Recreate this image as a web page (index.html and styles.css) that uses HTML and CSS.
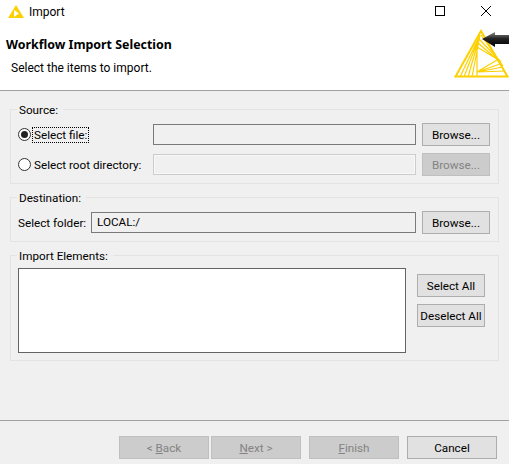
FILE: index.html
```html
<!DOCTYPE html>
<html lang="en">
<head>
  <meta charset="UTF-8">
  <meta name="viewport" content="width=device-width, initial-scale=1.0">
  <title>Import</title>
  <link rel="stylesheet" href="styles.css">
</head>
<body>
  <div class="titlebar">
    <svg class="app-icon" width="16" height="13" viewBox="0 0 16 13">
      <polygon points="8,0 16,13 0,13" fill="#fdd000"/>
      <polygon points="6,5 11,8.5 6,12" fill="#fff"/>
    </svg>
    <span class="title">Import</span>
    <svg class="win-btn max" width="10" height="10" viewBox="0 0 10 10">
      <rect x="0.5" y="0.5" width="9" height="9" fill="none" stroke="#000"/>
    </svg>
    <svg class="win-btn close" width="10" height="10" viewBox="0 0 10 10">
      <path d="M0 0L10 10M10 0L0 10" fill="none" stroke="#000"/>
    </svg>
  </div>

  <div class="banner">
    <div class="banner-text">
      <h1>Workflow Import Selection</h1>
      <p>Select the items to import.</p>
    </div>
    <svg class="logo" width="55" height="50" viewBox="0 0 55 50">
      <defs>
        <linearGradient id="arrowFill" x1="0" y1="0" x2="0" y2="1">
          <stop offset="0" stop-color="#888"/>
          <stop offset="0.45" stop-color="#222"/>
          <stop offset="1" stop-color="#000"/>
        </linearGradient>
      </defs>
      <g fill="none" stroke="#fdd000" stroke-width="1.2">
        <polygon points="27,2 53.5,47.5 1.5,47.5" stroke-width="2"/>
        <path d="M26 6L6 48M26 6L10 48M26 6L14 48M26 6L18 48M23 19L23 47"/>
        <path d="M27 6L49 37M25 10L47 33M24 14L45 32M23 18L43 30"/>
        <path d="M23 43L43 31M23 43L46 35M23 43L49 38M23 43L51 42"/>
      </g>
      <polygon points="28,10 41,3 41,6 55,6 55,15 41,15 41,18" fill="url(#arrowFill)"/>
    </svg>
  </div>

  <div class="content">
    <div class="group source">
      <span class="legend">Source:</span>
      <div class="row">
        <label class="radio checked"><span class="dot"></span><span class="focus">Select file:</span></label>
        <div class="field"></div>
        <button class="btn">Browse...</button>
      </div>
      <div class="row">
        <label class="radio"><span class="dot"></span><span class="radio-text">Select root directory:</span></label>
        <div class="field off"></div>
        <button class="btn off">Browse...</button>
      </div>
    </div>

    <div class="group dest">
      <span class="legend">Destination:</span>
      <div class="row">
        <label class="folder-label">Select folder:</label>
        <div class="field">LOCAL:/</div>
        <button class="btn">Browse...</button>
      </div>
    </div>

    <div class="group elements">
      <span class="legend">Import Elements:</span>
      <div class="list"></div>
      <div class="side">
        <button class="btn">Select All</button>
        <button class="btn">Deselect All</button>
      </div>
    </div>
  </div>

  <div class="footer">
    <button class="btn wide off">&lt; <u>B</u>ack</button>
    <button class="btn wide off"><u>N</u>ext &gt;</button>
    <button class="btn wide off gap"><u>F</u>inish</button>
    <button class="btn wide gap">Cancel</button>
  </div>
</body>
</html>
```

FILE: styles.css
```css
* {
  box-sizing: border-box;
}

body {
  font-family: 'Roboto', sans-serif;
  font-size: 11.7px;
  background-color: #f0f0f0;
  color: #000;
  margin: 0;
  width: 509px;
  height: 464px;
  overflow: hidden;
  display: flex;
  flex-direction: column;
}

.titlebar {
  height: 24px;
  background-color: #fff;
  display: flex;
  align-items: center;
  padding-left: 8px;
}

.app-icon {
  margin-right: 5px;
  margin-bottom: 1px;
}

.title {
  flex: 1;
  font-size: 12px;
}

.win-btn {
  margin-bottom: 2px;
}

.win-btn.max {
  margin-right: 36px;
}

.win-btn.close {
  margin-right: 18px;
}

.banner {
  height: 67px;
  background-color: #fff;
  border-bottom: 1px solid #a0a0a0;
  display: flex;
  justify-content: space-between;
}

h1 {
  font-family: 'Noto Sans', sans-serif;
  font-size: 12.4px;
  font-weight: bold;
  line-height: 16px;
  margin: 13px 0 0 6px;
}

.banner-text p {
  font-size: 12px;
  line-height: 16px;
  margin: 7px 0 0 11px;
}

.logo {
  margin-top: 5px;
}

.content {
  height: 329px;
  padding: 18px 10px 0;
}

.group {
  width: 489px;
  margin-bottom: 13px;
  padding: 13px 8px 7px 7px;
  border: 1px solid #e3e3e3;
  position: relative;
}

.legend {
  position: absolute;
  left: 6px;
  top: -8px;
  padding: 0 5px 0 2px;
  line-height: 16px;
  background-color: #f0f0f0;
}

.row {
  display: flex;
  align-items: center;
  height: 23px;
}

.row + .row {
  margin-top: 7px;
}

.radio {
  width: 135px;
  display: flex;
  align-items: center;
}

.dot {
  width: 13px;
  height: 13px;
  border: 1px solid #333;
  border-radius: 50%;
  background-color: #fff;
  margin-right: 2px;
  display: flex;
  align-items: center;
  justify-content: center;
}

.checked .dot::after {
  content: "";
  width: 7px;
  height: 7px;
  border-radius: 50%;
  background-color: #222;
}

.focus {
  outline: 1px dotted #000;
  padding: 0 1px;
}

.radio-text {
  padding-left: 1px;
}

.folder-label {
  width: 73px;
}

.field {
  flex: 1;
  height: 21px;
  border: 1px solid #7a7a7a;
  padding-left: 5px;
  line-height: 19px;
}

.field.off {
  border-color: #ccc;
  box-shadow: inset 0 0 0 1px #f8f8f8;
}

.btn {
  font: inherit;
  color: #000;
  height: 23px;
  width: 68px;
  padding: 0;
  margin-left: 6px;
  background-color: #e1e1e1;
  border: 1px solid #adadad;
}

.btn.off {
  color: #838383;
  background-color: #ccc;
  border-color: #bfbfbf;
}

.elements {
  display: flex;
  padding-top: 12px;
}

.list {
  width: 388px;
  height: 85px;
  background-color: #fff;
  border: 1px solid #646464;
}

.side {
  margin: 6px 0 0 11px;
  display: flex;
  flex-direction: column;
  gap: 7px;
}

.side .btn {
  margin-left: 0;
}

.footer {
  flex: 1;
  border-top: 1px solid #a0a0a0;
  display: flex;
  padding: 15px 0 0 119px;
}

.btn.wide {
  width: 90px;
  margin-left: 2px;
}

.btn.wide:first-child {
  margin-left: 0;
}

.btn.wide.gap {
  margin-left: 8px;
}
```
